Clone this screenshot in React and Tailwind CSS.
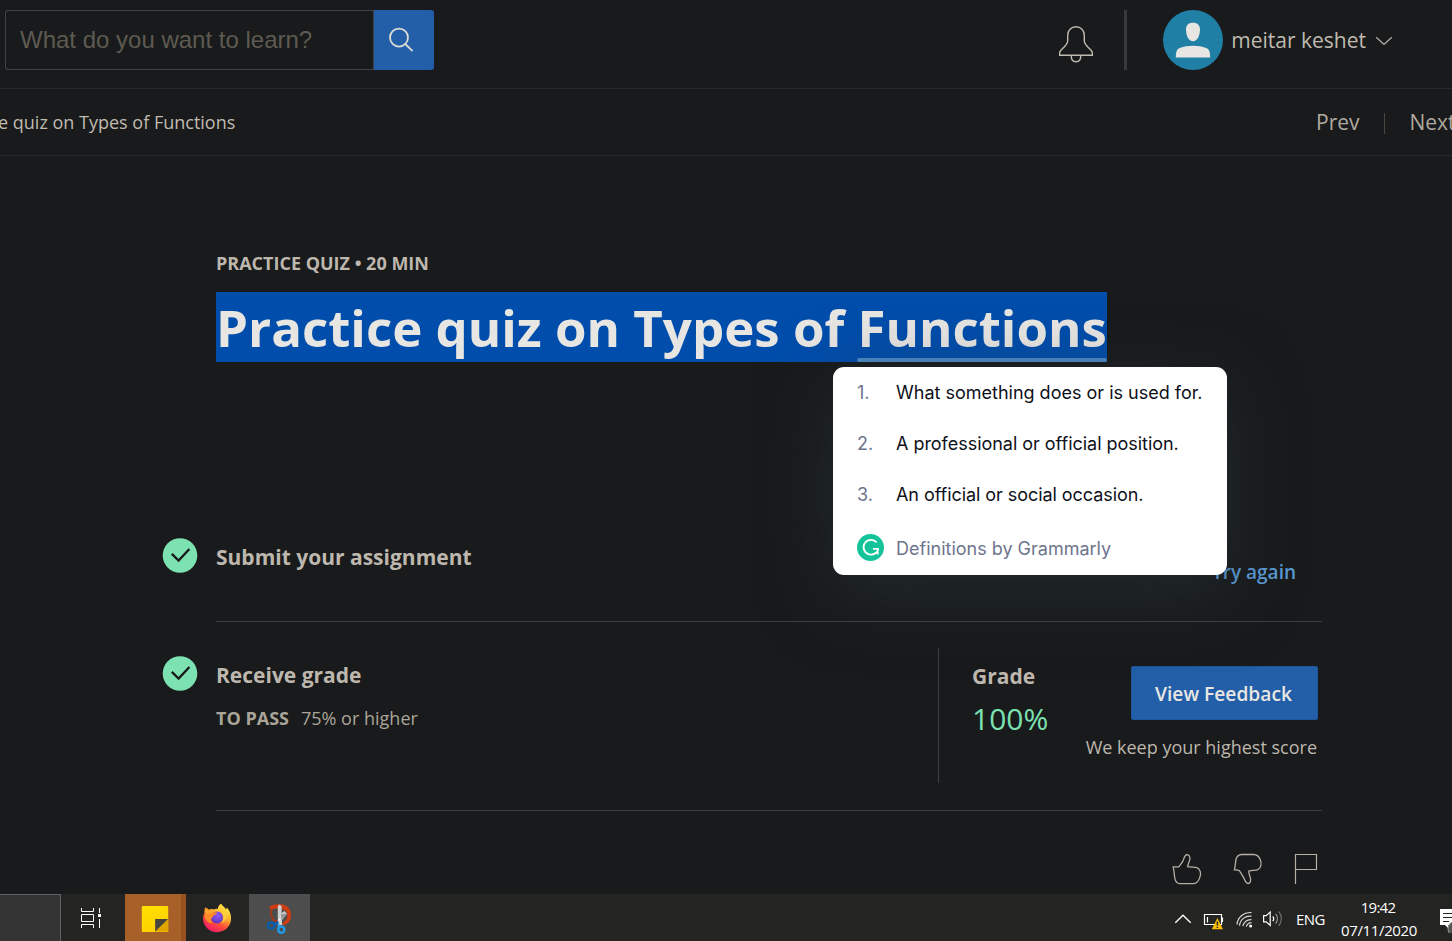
import React from 'react';

function CheckBadge() {
  return (
    <svg width="36" height="36" viewBox="0 0 36 36" className="shrink-0">
      <circle cx="18" cy="18.5" r="17.3" fill="#7de2b2" />
      <path d="M9.8 16.9 L16.6 23.6 L27.4 12" fill="none" stroke="#181a1b" strokeWidth="2.3" />
    </svg>
  );
}

function Header() {
  return (
    <header className="flex h-[89px] items-start border-b border-[#26292b] pt-[10px] pl-[5px]">
      <div className="flex h-[60px] w-[429px]">
        <div className="flex w-[368px] items-center rounded-l-[3px] border border-r-0 border-[#3f4345] pl-[14px] font-['Liberation_Sans',sans-serif] text-[24px] leading-[28px] text-[#5e5a52]">
          What do you want to learn?
        </div>
        <div className="flex flex-1 items-center rounded-r-[3px] border-l border-[#3f4345] bg-[#235fa8] pl-[14px]">
          <svg width="26" height="26" viewBox="0 0 26 26" fill="none" stroke="#dedbd4" strokeWidth="1.8">
            <circle cx="11" cy="10.6" r="9" />
            <path d="M17.3 17 L24.6 24.2" />
          </svg>
        </div>
      </div>
      <div className="ml-auto mr-[59px] flex h-[60px] items-center">
        <svg width="36" height="38" viewBox="0 0 36 38" fill="none" stroke="#c0bab0" strokeWidth="1.4" className="mt-[7px]">
          <path d="M1.7 30.3 V27.2 C2 24.8 9.7 20.5 9.7 16 V10.5 C9.7 5.5 13 1.8 18 1.8 C23 1.8 26.3 5.5 26.3 10.5 V16 C26.3 20.5 34 24.8 34.3 27.2 V30.3 Z" />
          <path d="M13.2 30.8 C13.2 34.4 15 36.7 18 36.7 C21 36.7 22.8 34.4 22.8 30.8" />
        </svg>
        <div className="ml-[30px] h-[60px] w-[3px] bg-[#353b3d]" />
        <svg width="60" height="60" viewBox="0 0 60 60" className="ml-[36px]">
          <circle cx="30" cy="30" r="30" fill="#207fa5" />
          <path d="M30 12.7 C34.8 12.7 37.2 15.4 37 19.8 C36.8 26 34.4 31.2 30 31.2 C25.6 31.2 23.2 26 23 19.8 C22.8 15.4 25.2 12.7 30 12.7 Z" fill="#e8e6e3" />
          <path d="M12.8 47.6 C13 41.5 13.6 39 17 37.9 C24 35 36 35 43 37.9 C46.4 39 47 41.5 47.2 47.6 Z" fill="#e8e6e3" />
        </svg>
        <span className="ml-[8px] text-[21px] leading-[30px] text-[#c0bab0]">meitar keshet</span>
        <svg width="18" height="10" viewBox="0 0 18 10" fill="none" stroke="#b5afa5" strokeWidth="1.3" className="mt-[2px] ml-[9px]">
          <path d="M1.2 1.2 L9 8.4 L16.8 1.2" />
        </svg>
      </div>
    </header>
  );
}

function CourseNav() {
  return (
    <nav className="flex h-[67px] items-center justify-between border-b border-[#26292b] text-[#c0bab0]">
      <span className="-ml-[2px] text-[18px] leading-[24px]">e quiz on Types of Functions</span>
      <div className="flex w-[136px] items-center overflow-hidden text-[21px] leading-[30px] text-[#b0aaa0]">
        <span>Prev</span>
        <span className="mt-[2px] ml-[24px] h-[21px] w-px shrink-0 bg-[#4a4741]" />
        <span className="ml-[25px]">Next</span>
      </div>
    </nav>
  );
}

function Definition({ number, children }) {
  return (
    <div className="flex h-[51px] items-center">
      <span className="w-[39px] text-[#6d758d]">{number}</span>
      <span className="whitespace-nowrap">{children}</span>
    </div>
  );
}

function DefinitionsPopup() {
  return (
    <div className="absolute top-[75px] left-[617px] z-10 h-[208px] w-[394px] rounded-[11px] bg-white pl-[24px] font-['Inter',sans-serif] text-[18px] leading-[24px] text-[#0e101a] shadow-[0_18px_72px_0_rgba(46,58,64,0.5)]">
      <Definition number="1.">What something does or is used for.</Definition>
      <Definition number="2."><span className="tracking-[-0.03px]">A professional or official position.</span></Definition>
      <Definition number="3."><span className="tracking-[-0.06px]">An official or social occasion.</span></Definition>
      <div className="flex h-[55px] items-center">
        <svg width="27" height="27" viewBox="0 0 27 27">
          <circle cx="13.5" cy="13.5" r="13.5" fill="#15c39a" />
          <path d="M19 7.8 A7.4 7.4 0 1 0 18.6 19" fill="none" stroke="#fff" strokeWidth="1.9" strokeLinecap="round" />
          <path d="M16 14.9 H21 C21 17 20.4 18.3 18.4 19.3 M20.7 15 V20.6" fill="none" stroke="#fff" strokeWidth="1.8" />
        </svg>
        <span className="mt-[2px] ml-[12px] text-[#6d758d]">Definitions by Grammarly</span>
      </div>
    </div>
  );
}

function SelectedTitle() {
  return (
    <div className="relative mt-[17px]">
      <h1 className="flex h-[70px] w-[891px] whitespace-pre bg-[#004dab] text-[51px] leading-[70px] font-bold text-[#e8e6e3]">
        <span>Practice quiz on Types of </span>
        <span className="relative">
          Functions
          <span className="absolute right-0 bottom-0 left-0 h-[4px] rounded-full bg-[#4a8ac8]" />
        </span>
      </h1>
      <DefinitionsPopup />
    </div>
  );
}

function Quiz() {
  return (
    <main className="h-[738px] pt-[95px] pr-[130px] pl-[162px]">
      <div className="pl-[54px]">
        <p className="text-[18px] leading-[24px] font-bold text-[#bdb7ae]">PRACTICE QUIZ • 20 MIN</p>
        <SelectedTitle />
      </div>
      <section className="mt-[175px] flex h-[85px] items-start">
        <CheckBadge />
        <div className="ml-[18px] flex h-[85px] flex-1 items-start justify-between border-b border-[#3c4042] pr-[26px]">
          <h2 className="mt-[5px] text-[21px] leading-[30px] font-bold text-[#bdb7ae]">Submit your assignment</h2>
          <span className="mt-[20px] text-[19px] leading-[30px] font-semibold text-[#5b9bd5]">Try again</span>
        </div>
      </section>
      <section className="flex h-[189px] items-start">
        <div className="pt-[33px]"><CheckBadge /></div>
        <div className="ml-[18px] flex h-[189px] flex-1 border-b border-[#3c4042] pt-[26px]">
          <div className="w-[722px] pt-[12px]">
            <h2 className="text-[21px] leading-[30px] font-bold text-[#bdb7ae]">Receive grade</h2>
            <p className="mt-[15px] flex gap-3 text-[18px] leading-[26px] text-[#aaa499]">
              <span className="font-bold">TO PASS</span>
              <span>75% or higher</span>
            </p>
          </div>
          <div className="flex h-[135px] flex-1 justify-between border-l border-[#3c4042] pr-[4px] pl-[33px]">
            <div className="pt-[13px]">
              <h3 className="text-[21px] leading-[30px] font-bold text-[#bdb7ae]">Grade</h3>
              <p className="mt-[8px] text-[30px] leading-[40px] text-[#7de2b2]">100%</p>
            </div>
            <div className="flex flex-col items-end pt-[18px]">
              <div className="flex h-[54px] w-[187px] items-center justify-center rounded-[2px] border border-[#20569a] bg-[#235fa8] pt-[2px] pr-[2px] text-[19.2px] leading-[30px] font-semibold text-[#e8e6e3]">
                View Feedback
              </div>
              <p className="mt-[14px] pr-px text-[18px] leading-[26px] text-[#bdb7ae]">We keep your highest score</p>
            </div>
          </div>
        </div>
      </section>
      <div className="mt-[41px] flex justify-end gap-[30px] pr-[4px]">
        <svg width="30" height="33" viewBox="0 0 30 33" fill="none" stroke="#b5afa5" strokeWidth="1.3">
          <path d="M1.2 14.8 H6.8 C8.6 12.4 10.3 10.5 11.4 7.9 C12.3 5.4 12.6 2.9 15 2.7 C17.5 2.8 18.2 5 17.8 7.5 C17.4 10.1 15.8 12 15.6 14.7 C19.5 15.6 22 14.6 25 15.6 C28.8 17.4 29.2 21.9 27.7 25.6 C26.8 28.6 24.6 31.3 21.5 31.6 H8 C4.8 31.3 3.7 29.6 3.1 27.3 C2 23.2 2.2 18.8 1.2 14.8 Z" />
        </svg>
        <svg width="31" height="33" viewBox="0 0 31 33" fill="none" stroke="#b5afa5" strokeWidth="1.3" className="ml-[1px]">
          <path d="M1.4 17.8 C2.4 14 2.4 10.4 3.1 7 C3.9 4.2 5.8 2.7 8.5 2.5 H20.5 C24.3 2.6 26.3 5 27.3 7.8 C28.7 11.3 28.3 15.9 24.8 17.7 C21.9 18.8 18.8 18 15.8 19.1 C15.4 22 17.3 24.2 17.6 27 C17.8 29.5 17 31.4 15 31.5 C12.8 31.3 12.2 28.9 11 26.4 C9.7 23.6 8 21 6.5 18.8 C4.9 17.8 3.2 17.9 1.4 17.8 Z" />
        </svg>
        <svg width="24" height="33" viewBox="0 0 24 33" fill="none" stroke="#b5afa5" strokeWidth="1.2">
          <path d="M1.5 32 V2.5 H22.5 V17.5 H1.5" />
        </svg>
      </div>
    </main>
  );
}

function FirefoxIcon() {
  return (
    <svg width="30" height="30" viewBox="0 0 30 30">
      <defs>
        <linearGradient id="flame" x1="0.8" y1="0.05" x2="0.25" y2="0.95">
          <stop offset="0" stopColor="#fff04a" />
          <stop offset="0.35" stopColor="#ffb22e" />
          <stop offset="0.65" stopColor="#ff5038" />
          <stop offset="1" stopColor="#ee1a68" />
        </linearGradient>
        <radialGradient id="globe" cx="0.6" cy="0.3" r="0.8">
          <stop offset="0" stopColor="#8b5cf6" />
          <stop offset="1" stopColor="#5b31b8" />
        </radialGradient>
      </defs>
      <path d="M19 0.8 C20.5 2.8 22.6 4 24 6.6 L25 4.6 C27.6 8 29.2 11.6 29.1 15.6 C28.8 23.6 22.8 29.2 15.2 29.2 C7.2 29.2 1.2 23.4 1.1 15.8 C1 12 2.4 9 4.2 6.6 L4.5 4.5 L7 6.8 C8.6 6 10.2 5.9 11.6 6.4 C13.6 5.5 15 5.6 15.8 5.9 C16 3.6 17.4 2 19 0.8 Z" fill="url(#flame)" />
      <circle cx="15" cy="14.6" r="6" fill="url(#globe)" />
      <path d="M2.6 12 C4.4 7.6 9.2 8 11 9.2 L15.2 9.6 C15 11.4 12.6 11.8 11.6 12.6 C11 13.4 11.2 14 10.2 14.4 C8.4 15.8 8.6 18.8 10.6 20.4 C6 20.4 2.4 16.4 2.6 12 Z" fill="#ff8a28" />
      <path d="M3 4 L6 8 L9 6 L11 9.4 L5 11 L2.4 9 Z" fill="#ffa52c" />
      <path d="M16 6 C19 7.2 20.4 9 20.6 11.4 C22.4 14.4 21.4 18.6 18.6 20.6 C24 19.4 26.6 13 23 7.8 C20.6 5 19.2 3.4 19 0.8 C17.2 2.4 16.2 4 16 6 Z" fill="#ffcf3a" />
    </svg>
  );
}

function SnipIcon() {
  return (
    <svg width="26" height="32" viewBox="0 0 26 32">
      <path d="M12.5 17.6 C8.5 19 6.4 16.5 6 13.5 C4.4 10.6 5 7.6 6.6 5" fill="none" stroke="#a93414" strokeWidth="1.8" />
      <path d="M3 4.6 C4.5 1.8 12 0.6 17 1.6 C22.5 3 25.7 7.6 25 13 C24.5 18.5 21.5 21.6 16.5 22.4 L16 20.4 C19.5 18.6 21.6 15.6 21.4 11.6 C21 7.4 16.5 5 11 5.5 C7 5.8 4.4 7.2 3 4.6 Z" fill="#cf3c10" />
      <path d="M11.8 3.4 L13 1.4 L15.6 3 V10 L18.6 8 L21 11 L16 17 V22 H11.8 Z" fill="#d0d0d0" />
      <path d="M15 11 L21 10.8 L15.6 17.6 Z" fill="#969696" />
      <ellipse cx="5.2" cy="22.6" rx="3.4" ry="3" fill="none" stroke="#075fb0" strokeWidth="2.4" />
      <path d="M8.4 21 L12.5 19.2" stroke="#075fb0" strokeWidth="2.6" />
      <ellipse cx="15.3" cy="26.6" rx="3.1" ry="3.2" fill="none" stroke="#1e9be8" strokeWidth="2.5" />
      <path d="M12.8 21.5 V25" stroke="#1e9be8" strokeWidth="2.2" />
      <circle cx="13.6" cy="16.6" r="0.9" fill="#fff" />
    </svg>
  );
}

function Taskbar() {
  return (
    <footer className="flex h-[47px] items-stretch overflow-hidden bg-[#242422] text-[15px] text-white">
      <div className="w-[61px] shrink-0 border-t border-r border-[#606366] bg-[#333333]" />
      <div className="flex w-[64px] items-center pl-[19px]">
        <svg width="22" height="20" viewBox="0 0 22 20" fill="none" stroke="#fff" strokeWidth="1" className="mt-px">
          <path d="M1.5 0 V3.5 H13.5 V0 M1.5 20 V16.5 H13.5 V20 M1.5 6.5 H13.5 V13.5 H1.5 Z M19.5 0 V5 M19.5 11 V20" />
          <rect x="18" y="6" width="3" height="3" fill="#fff" stroke="none" />
        </svg>
      </div>
      <div className="flex w-[61px] items-center border-r-[5px] border-[#985120] bg-[#a86029] pl-[16px]">
        <svg width="28" height="28" viewBox="0 0 28 28" className="mt-[2px]">
          <defs>
            <linearGradient id="note" x1="0" y1="0" x2="0.5" y2="1">
              <stop offset="0" stopColor="#ffe100" />
              <stop offset="1" stopColor="#ffd000" />
            </linearGradient>
          </defs>
          <rect x="0.8" y="1" width="26.4" height="26" rx="1" fill="url(#note)" />
          <path d="M14.2 26.6 V14 H27.2 V26.6 Z" fill="#e0a500" />
          <path d="M14.2 26.4 V14 H27 Z" fill="#46443d" />
        </svg>
      </div>
      <div className="flex w-[63px] items-center pt-px pl-[16px]"><FirefoxIcon /></div>
      <div className="flex w-[61px] items-center bg-[#4d4d4d] pt-[2px] pl-[17px]"><SnipIcon /></div>
      <div className="ml-auto flex items-center">
        <svg width="18" height="10" viewBox="0 0 18 10" fill="none" stroke="#fff" strokeWidth="1.3" className="mt-[2px]">
          <path d="M1.3 8.8 L9 1.2 L16.7 8.8" />
        </svg>
        <svg width="21" height="18" viewBox="0 0 21 18" className="mt-[6px] ml-[11px]">
          <path d="M1.5 2.5 H18.5 V12.5 H1.5 Z M4.5 5 V10.5 M19.5 5.5 V10" fill="none" stroke="#fff" strokeWidth="1.2" />
          <path d="M14.4 6 L20 17.3 H8.8 Z" fill="#fbbc09" />
          <path d="M14.4 9.5 V13.5 M14.4 14.7 V16" stroke="#222" strokeWidth="1.4" />
        </svg>
        <svg width="17" height="17" viewBox="0 0 17 17" className="mt-[4px] ml-[12px]" fill="none" stroke="#d6d6d6" strokeWidth="1.2">
          <path d="M1 13.5 A13 13 0 0 1 15.5 1.6 M3.5 14.8 A10.5 10.5 0 0 1 15.5 5.2 M6.8 15.2 A8 8 0 0 1 15.5 8.6 M10.3 15.6 A5.5 5.5 0 0 1 15.5 11.6" />
          <circle cx="14.6" cy="15" r="1.5" fill="#fff" stroke="none" />
        </svg>
        <svg width="22" height="18" viewBox="0 0 22 18" className="mt-[2px] ml-[9px]" fill="none" stroke="#fff" strokeWidth="1.2">
          <path d="M1.6 5.6 H4.2 L8.2 2 V15.4 L4.2 11.8 H1.6 Z" />
          <path d="M10.8 6.3 A4 4 0 0 1 10.8 11.2" />
          <path d="M13.6 4 A7 7 0 0 1 13.6 13.5" stroke="#929292" />
          <path d="M16.6 1.5 A11 11 0 0 1 16.6 16" stroke="#6b6b6b" />
        </svg>
        <span className="mt-[4px] ml-[12px] w-[29px] tracking-[-0.6px]">ENG</span>
        <div className="ml-[14px] flex w-[80px] flex-col items-center pt-[2px] leading-[23px] whitespace-nowrap">
          <span className="pr-[2px] tracking-[-0.7px]">19:42</span>
          <span className="tracking-[-0.35px]">07/11/2020</span>
        </div>
        <svg width="13" height="30" viewBox="0 0 13 30" className="ml-[20px]">
          <path d="M1 6 H13 V22 H9 V25 L6 22 H1 Z" fill="#fff" />
          <path d="M4 10.5 H13 M4 14.5 H13 M4 18.5 H10" stroke="#242422" strokeWidth="1.1" />
          <circle cx="17" cy="26" r="8" fill="#555" stroke="#9a9a9a" />
        </svg>
      </div>
    </footer>
  );
}

export default function App() {
  return (
    <div className="h-[941px] w-[1452px] overflow-hidden bg-[#181a1b] font-['Open_Sans','Noto_Sans',sans-serif]">
      <Header />
      <CourseNav />
      <Quiz />
      <Taskbar />
    </div>
  );
}
